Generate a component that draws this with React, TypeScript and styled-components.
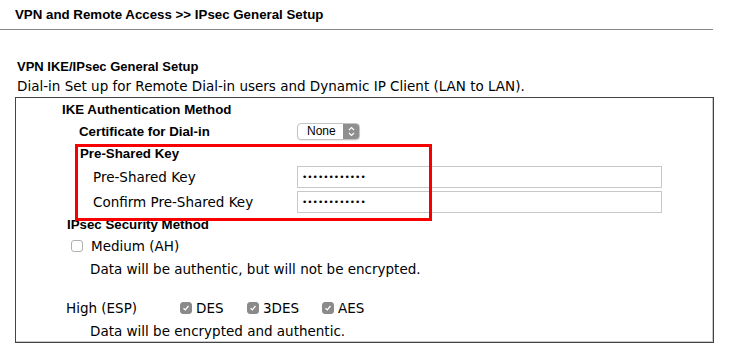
import styled, { createGlobalStyle } from "styled-components";

const GlobalStyle = createGlobalStyle`
  body {
    margin: 0;
    background: #fff;
    color: #000;
  }
`;

const Page = styled.div`
  position: relative;
  width: 734px;
  height: 355px;
  overflow: hidden;
`;

const PageTitle = styled.div`
  width: 698px;
  height: 29px;
  padding-left: 15px;
  box-sizing: content-box;
  border-bottom: 1px solid #888;
  font: bold 13.3px "Liberation Sans", Arial, sans-serif;
  line-height: 30px;
`;

const SectionTitle = styled.div`
  margin-top: 29px;
  padding-left: 17px;
  font: bold 13px "Liberation Sans", Arial, sans-serif;
  line-height: 16px;
`;

const Description = styled.div`
  padding-left: 17px;
  font: 13.5px "DejaVu Sans", Verdana, sans-serif;
  line-height: 22px;
`;

const Panel = styled.div`
  margin-left: 15px;
  width: 699px;
  box-sizing: border-box;
  border: 1px solid #444;
  box-shadow: inset -1px -1px 0 #c8c8c8;
  display: flex;
  flex-direction: column;
`;

const Row = styled.div<{ $indent: number; $h: number }>`
  display: flex;
  align-items: center;
  height: ${(p) => p.$h}px;
  padding-left: ${(p) => p.$indent}px;
`;

const Heading = styled.span`
  font: bold 13.3px "Liberation Sans", Arial, sans-serif;
`;

const Label = styled.span<{ $w?: number }>`
  font: 13.5px "DejaVu Sans", Verdana, sans-serif;
  width: ${(p) => (p.$w ? `${p.$w}px` : "auto")};
  flex-shrink: 0;
`;

const BoldLabel = styled(Heading)<{ $w: number }>`
  width: ${(p) => p.$w}px;
  flex-shrink: 0;
`;

const SelectBox = styled.div`
  display: flex;
  align-items: center;
  width: 63px;
  height: 17px;
  box-sizing: border-box;
  border: 1px solid #c4c4c4;
  border-radius: 4px;
  background: #fff;
  font: 12px "Liberation Sans", Arial, sans-serif;
  overflow: hidden;
  box-shadow: 0 1px 1px rgba(0, 0, 0, 0.08);
`;

const SelectText = styled.span`
  flex: 1;
  padding-left: 9px;
`;

const SelectArrows = styled.span`
  width: 16px;
  height: 15px;
  background: #8f8f8f;
  display: flex;
  align-items: center;
  justify-content: center;
`;

const KeyInput = styled.input`
  width: 365px;
  height: 22px;
  box-sizing: border-box;
  border: 1px solid #c8c8c8;
  padding: 0 4px;
  font: 9px "DejaVu Sans", Verdana, sans-serif;
  outline: none;
`;

const Box = styled.span<{ $checked?: boolean }>`
  display: inline-flex;
  align-items: center;
  justify-content: center;
  width: 12px;
  height: 12px;
  box-sizing: border-box;
  border-radius: 3px;
  border: 1px solid ${(p) => (p.$checked ? "#8a8a8a" : "#b0b0b0")};
  background: ${(p) => (p.$checked ? "#8a8a8a" : "#fff")};
  flex-shrink: 0;
`;

const Option = styled.span<{ $w: number }>`
  display: inline-flex;
  align-items: center;
  gap: 4px;
  width: ${(p) => p.$w}px;
  font: 13.5px "DejaVu Sans", Verdana, sans-serif;
`;

const OptionText = styled.span`
  margin-left: 4px;
`;

const Highlight = styled.div`
  position: absolute;
  left: 75px;
  top: 144px;
  width: 357px;
  height: 77px;
  box-sizing: border-box;
  border: 3px solid #f80000;
  pointer-events: none;
`;

function Check({ checked }: { checked?: boolean }) {
  return (
    <Box $checked={checked}>
      {checked && (
        <svg width="8" height="8" viewBox="0 0 8 8">
          <path d="M1.5 4.2 L3.3 5.9 L6.5 2" stroke="#fff" strokeWidth="1.3" fill="none" />
        </svg>
      )}
    </Box>
  );
}

export default function App() {
  return (
    <Page>
      <GlobalStyle />
      <PageTitle>VPN and Remote Access &gt;&gt; IPsec General Setup</PageTitle>
      <SectionTitle>VPN IKE/IPsec General Setup</SectionTitle>
      <Description>
        Dial-in Set up for Remote Dial-in users and Dynamic IP Client (LAN to LAN).
      </Description>

      <Panel>
        <Row $indent={46} $h={22}>
          <Heading>IKE Authentication Method</Heading>
        </Row>
        <Row $indent={63} $h={22}>
          <BoldLabel $w={218}>Certificate for Dial-in</BoldLabel>
          <SelectBox>
            <SelectText>None</SelectText>
            <SelectArrows>
              <svg width="7" height="11" viewBox="0 0 7 11">
                <path d="M1 4 L3.5 1.5 L6 4 M1 7 L3.5 9.5 L6 7" stroke="#fff" strokeWidth="1.2" fill="none" />
              </svg>
            </SelectArrows>
          </SelectBox>
        </Row>
        <Row $indent={64} $h={22}>
          <Heading>Pre-Shared Key</Heading>
        </Row>
        <Row $indent={77} $h={25}>
          <Label $w={204}>Pre-Shared Key</Label>
          <KeyInput type="password" value="............" readOnly />
        </Row>
        <Row $indent={77} $h={25}>
          <Label $w={204}>Confirm Pre-Shared Key</Label>
          <KeyInput type="password" value="............" readOnly />
        </Row>
        <Row $indent={51} $h={21}>
          <Heading>IPsec Security Method</Heading>
        </Row>
        <Row $indent={55} $h={22}>
          <Option $w={200}>
            <Check />
            <OptionText>Medium (AH)</OptionText>
          </Option>
        </Row>
        <Row $indent={74} $h={23}>
          <Label>Data will be authentic, but will not be encrypted.</Label>
        </Row>
        <Row $indent={0} $h={17} />
        <Row $indent={50} $h={22}>
          <Label $w={114}>High (ESP)</Label>
          <Option $w={67}>
            <Check checked />
            DES
          </Option>
          <Option $w={75}>
            <Check checked />
            3DES
          </Option>
          <Option $w={60}>
            <Check checked />
            AES
          </Option>
        </Row>
        <Row $indent={74} $h={23}>
          <Label>Data will be encrypted and authentic.</Label>
        </Row>
      </Panel>

      <Highlight />
    </Page>
  );
}
